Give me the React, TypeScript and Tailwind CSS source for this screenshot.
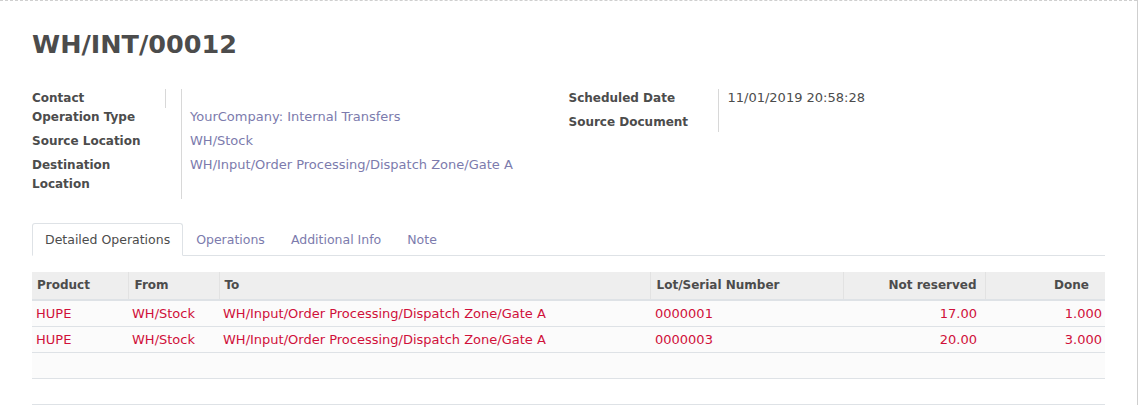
import React from 'react';

const LINK = 'text-[#7c7bad]';
const DANGER = 'text-[#d0103a]';

interface Field {
    label: string;
    value?: string;
    height: string;
}

const leftFields: Field[] = [
    { label: 'Operation Type', value: 'YourCompany: Internal Transfers', height: 'h-[24px]' },
    { label: 'Source Location', value: 'WH/Stock', height: 'h-[24px]' },
    { label: 'Destination Location', value: 'WH/Input/Order Processing/Dispatch Zone/Gate A', height: 'h-[43px]' },
];

const tabs = ['Detailed Operations', 'Operations', 'Additional Info', 'Note'];

interface Line {
    product: string;
    from: string;
    to: string;
    lot: string;
    notReserved: string;
    done: string;
}

const lines: Line[] = [
    { product: 'HUPE', from: 'WH/Stock', to: 'WH/Input/Order Processing/Dispatch Zone/Gate A', lot: '0000001', notReserved: '17.00', done: '1.000' },
    { product: 'HUPE', from: 'WH/Stock', to: 'WH/Input/Order Processing/Dispatch Zone/Gate A', lot: '0000003', notReserved: '20.00', done: '3.000' },
];

const App: React.FC = () => {
    return (
        <div className="h-[405px] w-[1139px] overflow-hidden bg-white font-['DejaVu_Sans',sans-serif] text-[13px] leading-[19px] text-[#4c4c4c]">
            <div className="h-full w-[1138px] border-r border-[#cfcfcf]">
                <div className="h-full border-t border-dashed border-[#cfcfcf] px-[32px]">
                    <h1 className="pt-[24px] text-[25.5px] font-bold leading-[38px] text-[#4c4c4c]">WH/INT/00012</h1>

                    {/* header groups */}
                    <div className="mt-[26px] grid grid-cols-2">
                        <div className="flex flex-col">
                            <div className="flex h-[19px] text-[12px]">
                                <div className="w-[134px] border-r border-[#d8d8d8] font-bold">Contact</div>
                                <div className="w-[16px] border-r border-[#d8d8d8]" />
                            </div>
                            {leftFields.map((f) => (
                                <div key={f.label} className={`flex ${f.height}`}>
                                    <div className="w-[150px] shrink-0 border-r border-[#d8d8d8] pr-[40px] text-[12px] font-bold">{f.label}</div>
                                    <div className={`pl-[8px] leading-[17px] ${LINK}`}>{f.value}</div>
                                </div>
                            ))}
                        </div>
                        <div className="flex flex-col">
                            <div className="flex h-[24px]">
                                <div className="w-[150px] shrink-0 border-r border-[#d8d8d8] text-[12px] font-bold">Scheduled Date</div>
                                <div className="pl-[9px] leading-[17px]">11/01/2019 20:58:28</div>
                            </div>
                            <div className="flex h-[19px]">
                                <div className="w-[150px] shrink-0 border-r border-[#d8d8d8] text-[12px] font-bold">Source Document</div>
                                <div className="pl-[9px]" />
                            </div>
                        </div>
                    </div>

                    {/* notebook tabs */}
                    <div className="mt-[24px] flex h-[33px] border-b border-[#dee2e6] text-[12.5px]">
                        {tabs.map((t, i) =>
                            i === 0 ? (
                                <div
                                    key={t}
                                    className="-mb-px flex h-[33px] items-center rounded-t-[3px] border border-b-white border-[#dee2e6] bg-white px-[12px] text-[#4c4c4c]"
                                >
                                    {t}
                                </div>
                            ) : (
                                <div key={t} className={`flex items-center px-[13px] ${LINK}`}>
                                    {t}
                                </div>
                            ),
                        )}
                    </div>

                    {/* detailed operations table */}
                    <table className="mt-[16px] w-full table-fixed border-collapse">
                        <colgroup>
                            <col className="w-[96px]" />
                            <col className="w-[91px]" />
                            <col className="w-[431px]" />
                            <col className="w-[193px]" />
                            <col className="w-[142px]" />
                            <col />
                        </colgroup>
                        <thead>
                            <tr className="h-[28px] border-b-2 border-[#dee2e6] bg-[#eeeeee] text-[12px] font-bold">
                                <th className="border-r border-[#e2e2e2] pl-[5px] text-left">Product</th>
                                <th className="border-r border-[#e2e2e2] pl-[6px] text-left">From</th>
                                <th className="border-r border-[#e2e2e2] pl-[5px] text-left">To</th>
                                <th className="border-r border-[#e2e2e2] pl-[6px] text-left">Lot/Serial Number</th>
                                <th className="border-r border-[#e2e2e2] pr-[8px] text-right">Not reserved</th>
                                <th className="pr-[16px] text-right">Done</th>
                            </tr>
                        </thead>
                        <tbody>
                            {lines.map((l) => (
                                <tr key={l.lot} className={`h-[26px] border-b border-[#dee2e6] bg-[#fbfbfb] ${DANGER}`}>
                                    <td className="pl-[4px]">{l.product}</td>
                                    <td className="pl-[4px]">{l.from}</td>
                                    <td className="pl-[4px]">{l.to}</td>
                                    <td className="pl-[5px]">{l.lot}</td>
                                    <td className="pr-[8px] text-right">{l.notReserved}</td>
                                    <td className="pr-[3px] text-right">{l.done}</td>
                                </tr>
                            ))}
                            <tr className="h-[26px] border-b border-[#dee2e6] bg-[#fbfbfb]">
                                <td colSpan={6} />
                            </tr>
                            <tr className="h-[26px] border-b border-[#dee2e6] bg-white">
                                <td colSpan={6} />
                            </tr>
                        </tbody>
                    </table>
                </div>
            </div>
        </div>
    );
};

export default App;
